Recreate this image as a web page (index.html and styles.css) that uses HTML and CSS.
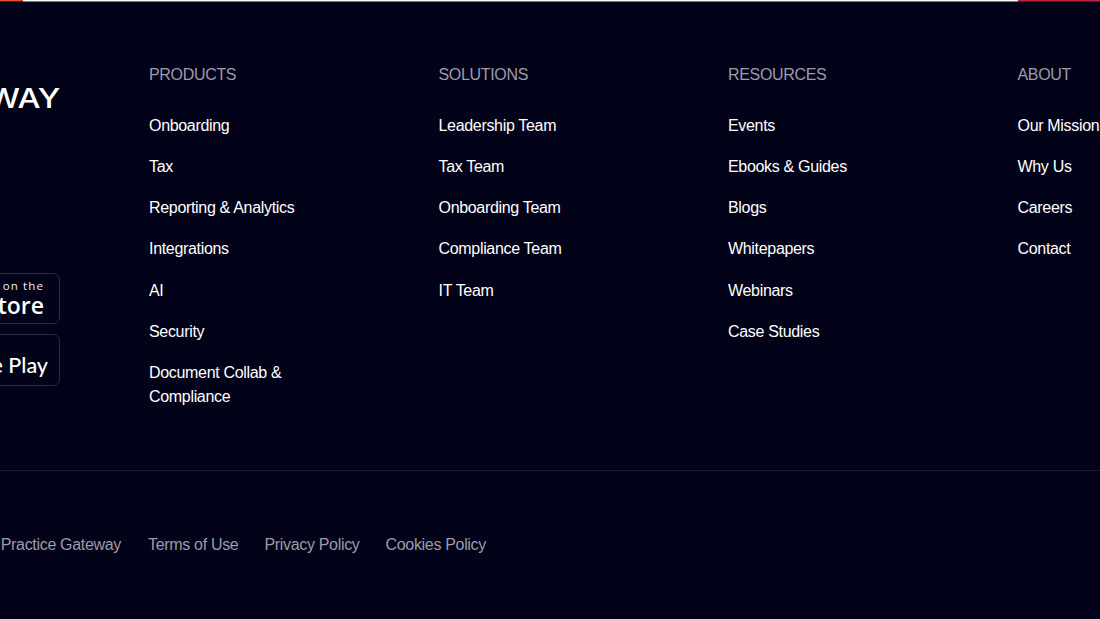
FILE: index.html
```html
<!DOCTYPE html>
<html lang="en">
<head>
<meta charset="utf-8">
<title>Practice Gateway footer</title>
<link rel="stylesheet" href="styles.css">
</head>
<body>
<footer class="footer">
  <div class="top-bar"><div class="top-bar-inner"></div></div>
  <div class="main">
    <div class="brand">
      <div class="logo-text">GATEWAY</div>
      <div class="stores">
        <a class="store">
          <span class="store-small apple-small">Download on the</span>
          <span class="store-big apple-big">App Store</span>
        </a>
        <a class="store store-play">
          <span class="store-big play-big">Google Play</span>
        </a>
      </div>
    </div>
    <nav class="columns">
      <div class="col">
        <h4 class="col-title">PRODUCTS</h4>
        <ul class="links">
          <li>Onboarding</li>
          <li>Tax</li>
          <li>Reporting &amp; Analytics</li>
          <li>Integrations</li>
          <li>AI</li>
          <li>Security</li>
          <li>Document Collab &amp; Compliance</li>
        </ul>
      </div>
      <div class="col">
        <h4 class="col-title">SOLUTIONS</h4>
        <ul class="links">
          <li>Leadership Team</li>
          <li>Tax Team</li>
          <li>Onboarding Team</li>
          <li>Compliance Team</li>
          <li>IT Team</li>
        </ul>
      </div>
      <div class="col">
        <h4 class="col-title">RESOURCES</h4>
        <ul class="links">
          <li>Events</li>
          <li>Ebooks &amp; Guides</li>
          <li>Blogs</li>
          <li>Whitepapers</li>
          <li>Webinars</li>
          <li>Case Studies</li>
        </ul>
      </div>
      <div class="col">
        <h4 class="col-title">ABOUT</h4>
        <ul class="links">
          <li>Our Mission</li>
          <li>Why Us</li>
          <li>Careers</li>
          <li>Contact</li>
        </ul>
      </div>
    </nav>
  </div>
  <div class="bottom">
    <span class="copyright">© 2025 Practice Gateway</span>
    <a class="legal">Terms of Use</a>
    <a class="legal">Privacy Policy</a>
    <a class="legal">Cookies Policy</a>
  </div>
</footer>
</body>
</html>
```
FILE: styles.css
```css
* { box-sizing: border-box; }
html, body { margin: 0; padding: 0; height: 100%; overflow: hidden; background: #020218; }
body { font-family: "Liberation Sans", Arial, sans-serif; font-size: 16px; color: #fff; letter-spacing: -0.32px; }
.footer { width: 1100px; height: 619px; overflow: hidden; }
.top-bar { height: 1px; background: linear-gradient(90deg, #e0502c, #b8243c); padding: 0 82px 0 23px; margin-bottom: 1px; box-shadow: 0 1px 0 rgba(190, 50, 50, 0.45); }
.top-bar-inner { height: 100%; background: #f4f4f4; box-shadow: 0 1px 0 rgba(244, 244, 244, 0.4); }
.main { display: flex; margin-left: -140px; padding-top: 61px; height: 469px; border-bottom: 1px solid #191a2e; width: 1240px; }
.brand { width: 289px; flex: none; display: flex; flex-direction: column; align-items: flex-start; }
.logo-text { width: 200px; text-align: right; font-family: "Inter", sans-serif; font-size: 27px; font-weight: 500; line-height: 30px; letter-spacing: -0.3px; margin-top: 21px; white-space: nowrap; transform: scaleX(1.2); transform-origin: right center; }
.stores { margin-top: 159px; width: 200px; display: flex; flex-direction: column; align-items: flex-end; gap: 10px; }
.store { width: 170px; height: 51px; border: 1px solid #2c2d44; border-radius: 7px; display: flex; flex-direction: column; align-items: flex-end; padding: 4px 15px 0 0; }
.store-play { height: 52px; padding: 17px 11px 0 0; }
.store-small { font-family: "Open Sans", sans-serif; font-size: 11.5px; font-weight: 500; letter-spacing: 1.1px; line-height: 15px; color: #f0f0f4; }
.store-big { white-space: nowrap; line-height: 24px; letter-spacing: 0; }
.apple-big { font-family: "Open Sans", sans-serif; font-size: 23px; font-weight: 600; }
.play-big { font-family: "Lato", sans-serif; font-size: 21.5px; font-weight: 500; line-height: 26px; }
.columns { display: grid; grid-template-columns: repeat(4, 289.5px); flex: none; }
.col-title { margin: 0 0 26.8px; font-size: 16px; font-weight: 400; line-height: 24px; color: #9c9ca9; }
.links { list-style: none; margin: 0; padding: 0; display: flex; flex-direction: column; gap: 17.2px; width: 170px; }
.links li { line-height: 24px; }
.col:last-child .links li { white-space: nowrap; }
.bottom { display: flex; align-items: center; margin-left: -140px; margin-top: 62px; gap: 26px; color: #9c9ca9; line-height: 24px; }
.copyright { width: 261px; margin-right: 1px; text-align: right; white-space: nowrap; flex: none; }
.legal { white-space: nowrap; }
```
